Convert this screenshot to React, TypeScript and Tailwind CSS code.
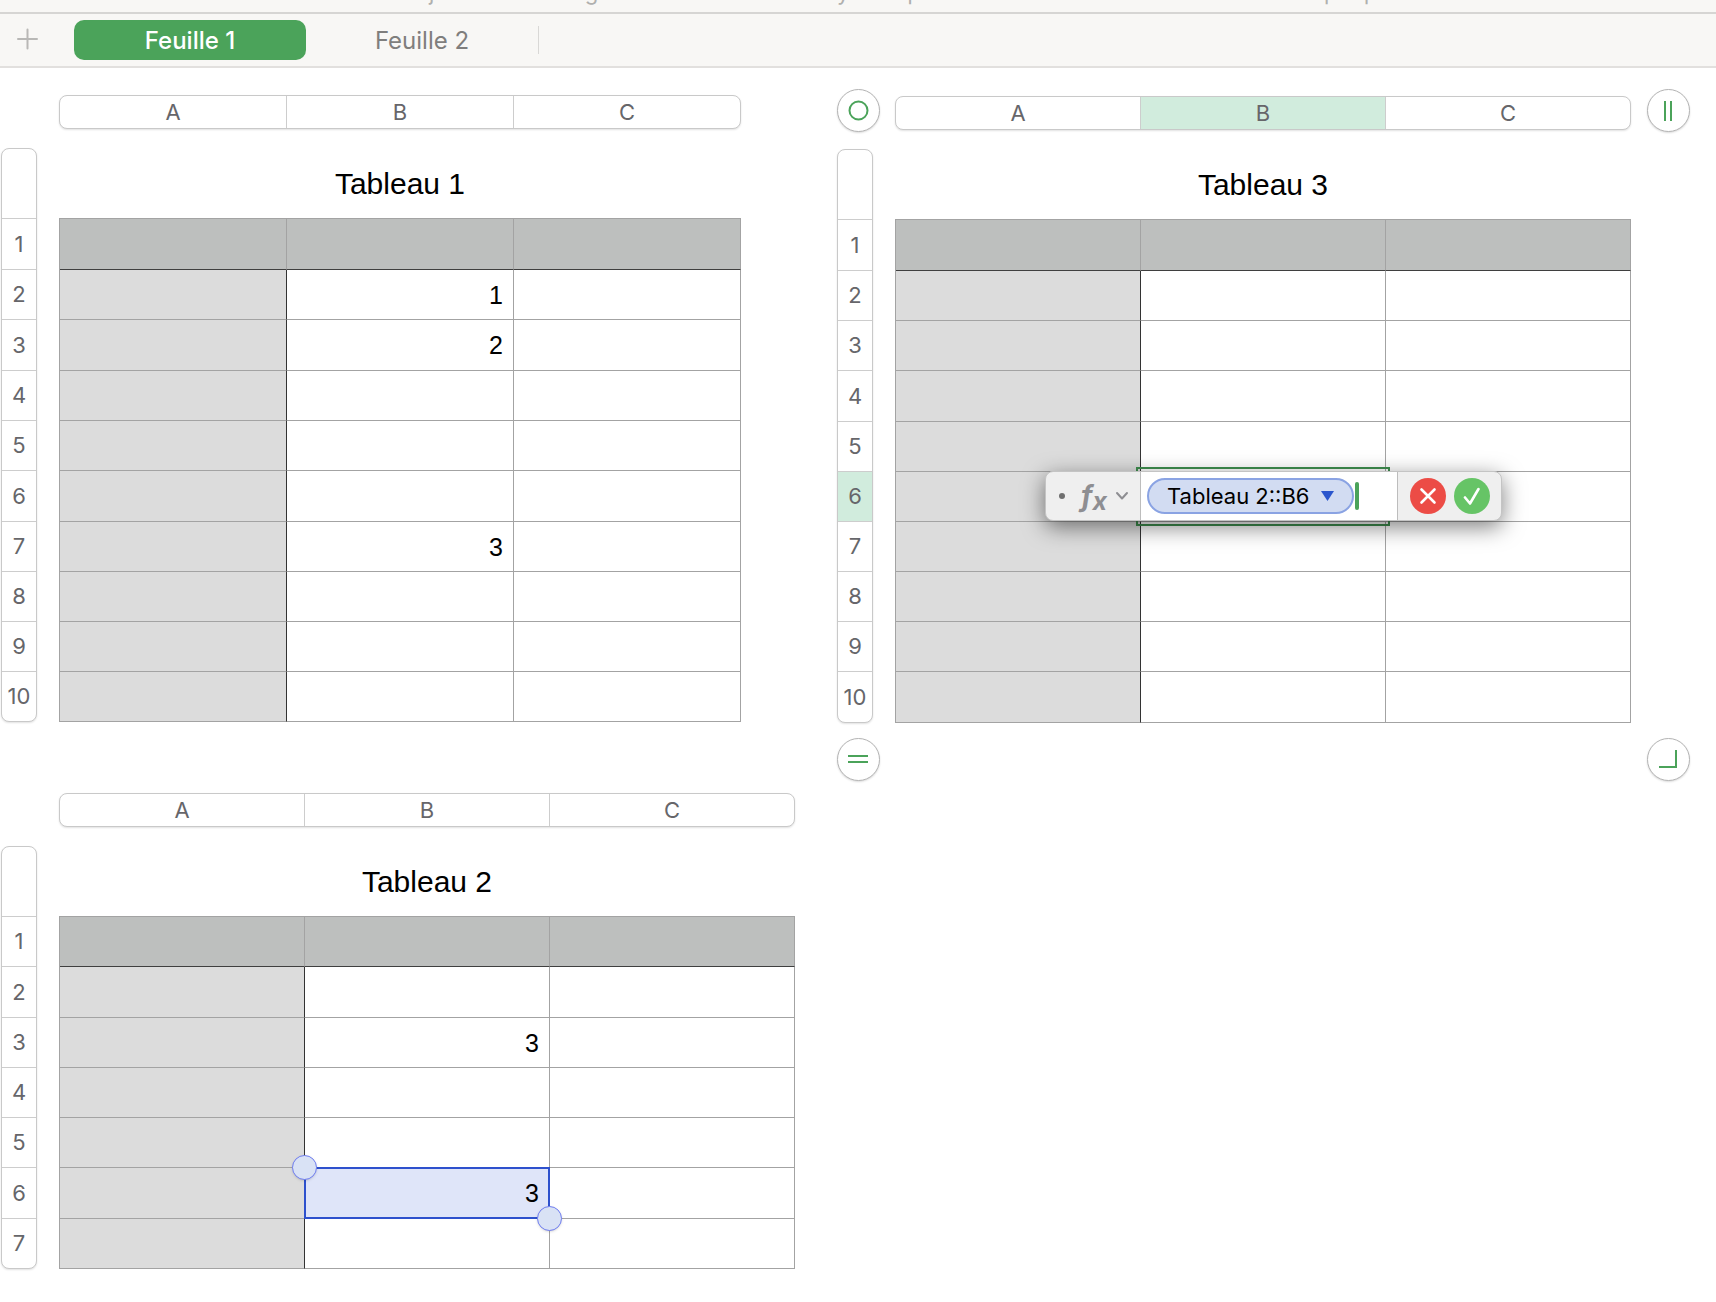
import { ReactNode } from "react";

interface SheetTableProps {
  title: string;
  rows: number[];
  colClass: string;
  values?: Record<string, string>;
  activeCol?: string;
  activeRow?: number;
  overlays?: Record<string, ReactNode>;
  children?: ReactNode;
}

const COLUMNS = ["A", "B", "C"];

const ROW_HEIGHT: Record<number, string> = {
  50: "h-[50px]",
  51: "h-[51px]",
};

const TOOLBAR = [
  { label: "Présentation", box: "ml-1 w-[130px]" },
  { label: "Zoom", box: "ml-12 w-[70px]" },
  { label: "Ajouter une catégorie", box: "ml-[154px] w-60" },
  { label: "Tableau croisé dynamique", box: "ml-4 w-[280px]" },
  { label: "Insérer", box: "ml-[132px] w-[90px]" },
  { label: "Tableau", box: "ml-4 w-[90px]" },
  { label: "Graphique", box: "ml-4 w-[110px]" },
  { label: "Texte", box: "ml-7 w-20" },
];

function SheetTable({ title, rows, colClass, values = {}, activeCol, activeRow, overlays = {}, children }: SheetTableProps) {
  return (
    <section className="relative grid w-max grid-cols-[36px_auto] gap-x-[22px] gap-y-[19px]">
      {/* Column letters */}
      <div className="col-start-2 flex h-[34px] overflow-hidden rounded-lg border border-[#c9c9c9] bg-white shadow-[0_1px_2px_rgba(0,0,0,0.12)]">
        {COLUMNS.map((col) => (
          <button
            key={col}
            className={`${colClass} shrink-0 border-r border-[#cdcdcd] text-[22px] leading-8 text-[#66666a] last:-mr-px ${
              col === activeCol ? "bg-[#d1ecdd]" : ""
            }`}
          >
            {col}
          </button>
        ))}
      </div>

      {/* Row numbers */}
      <div className="flex flex-col overflow-hidden rounded-lg border border-[#c9c9c9] bg-white shadow-[0_1px_2px_rgba(0,0,0,0.12)]">
        <div className="h-[70px] shrink-0 border-b border-[#cdcdcd]" />
        {rows.map((height, i) => (
          <button
            key={i}
            className={`${ROW_HEIGHT[height]} shrink-0 border-b border-[#cdcdcd] text-[22px] text-[#66666a] last:-mb-px ${
              i + 1 === activeRow ? "bg-[#d1ecdd]" : ""
            }`}
          >
            {i + 1}
          </button>
        ))}
      </div>

      <table className="table-fixed border-separate border-spacing-0 border-t border-l border-[#a3a3a3] font-['Liberation_Sans',sans-serif] text-black">
        <caption className="h-[70px] pt-0.5 text-[30px] leading-[68px]">{title}</caption>
        <tbody>
          {rows.map((height, i) => (
            <tr key={i} className={ROW_HEIGHT[height]}>
              {COLUMNS.map((col) => {
                const id = `${col}${i + 1}`;
                if (i === 0) {
                  return <th key={id} scope="col" className={`${colClass} border-r border-b border-r-[#a3a3a3] border-b-[#3f3f3f] bg-[#bdbfbe] p-0`} />;
                }
                if (col === "A") {
                  return <th key={id} scope="row" className="border-r border-b border-r-[#333333] border-b-[#a3a3a3] bg-[#dcdcdc] p-0" />;
                }
                return (
                  <td key={id} className="relative border-r border-b border-[#a3a3a3] p-0 pr-2.5 text-right text-[25px] leading-8">
                    {overlays[id]}
                    <span className="relative z-10">{values[id]}</span>
                  </td>
                );
              })}
            </tr>
          ))}
        </tbody>
      </table>
      {children}
    </section>
  );
}

function Handle({ label, place, children }: { label: string; place: string; children: ReactNode }) {
  return (
    <button
      aria-label={label}
      className={`absolute ${place} flex size-[43px] items-center justify-center rounded-full border border-[#b4b4b4] bg-white shadow-[0_1px_2px_rgba(0,0,0,0.15)]`}
    >
      <svg width="21" height="21" viewBox="0 0 21 21" fill="none" stroke="#4ba35a" strokeWidth="2" overflow="visible">
        {children}
      </svg>
    </button>
  );
}

function ReferencedCell() {
  return (
    <div className="absolute -inset-px z-10 border-2 border-[#2e51cd] bg-[#dfe5f9]">
      <span className="absolute -top-3.5 -left-3.5 size-[25px] rounded-full border border-[#6f7df0] bg-[#d9e2f5] shadow-sm" />
      <span className="absolute -right-3.5 -bottom-3.5 size-[25px] rounded-full border border-[#6f7df0] bg-[#d9e2f5] shadow-sm" />
    </div>
  );
}

function FormulaEditor() {
  return (
    <>
      <div className="absolute -inset-[5px] z-10 border-2 border-[#3f8f4f]" />
      <div className="absolute -top-px -left-24 z-20 flex h-[50px] w-[457px] overflow-hidden rounded-lg border border-[#c4c4c4] bg-[#efefef] font-['Inter',sans-serif] shadow-[0_6px_22px_rgba(0,0,0,0.5)]">
        <div className="flex w-[95px] shrink-0 items-center border-r border-[#bdbdbd] pl-[13px]">
          <span className="size-1.5 rounded-full bg-[#6f6f6f]" />
          <button aria-label="Format de la formule" className="ml-4 flex items-center text-[#8e8e92]">
            <span className="flex w-[26px] items-baseline text-[28px] leading-8 font-bold italic">
              f<sub className="relative top-1 bottom-0 text-[25px] leading-none">x</sub>
            </span>
            <svg className="ml-2" width="14" height="10" viewBox="0 0 14 10" fill="none" stroke="currentColor" strokeWidth="2" strokeLinecap="round" strokeLinejoin="round">
              <path d="M2 2l5 5.500 5-5.500" />
            </svg>
          </button>
        </div>
        <div className="flex w-[257px] shrink-0 items-center border-r border-[#bdbdbd] bg-white pl-1.5">
          <button className="flex h-9 w-[207px] shrink-0 items-center rounded-full border-2 border-[#8aa3e3] bg-[#d2dcf2] pl-[18px] text-[22px] whitespace-nowrap text-black">
            Tableau 2::B6
            <svg className="ml-3 shrink-0" width="13" height="10" viewBox="0 0 13 10" fill="#2b56cd">
              <path d="M0 0h13L6.500 10z" />
            </svg>
          </button>
          <span className="ml-px h-7 w-1 shrink-0 rounded-full bg-[#4ba35a]" />
          <input aria-label="Formule" className="min-w-0 flex-1 bg-transparent outline-none" />
        </div>
        <div className="flex flex-1 items-center gap-2 pl-3">
          <button aria-label="Annuler" className="flex size-9 items-center justify-center rounded-full bg-[#ec4c46]">
            <svg width="18" height="18" viewBox="0 0 18 18" fill="none" stroke="#ffffff" strokeWidth="2.600" strokeLinecap="round">
              <path d="M2.500 2.500l13 13M15.500 2.500l-13 13" />
            </svg>
          </button>
          <button aria-label="Valider" className="flex size-9 items-center justify-center rounded-full bg-[#66c466]">
            <svg width="18" height="18" viewBox="0 0 18 18" fill="none" stroke="#ffffff" strokeWidth="2.600" strokeLinecap="round" strokeLinejoin="round">
              <path d="M2 10.500l5 6L15.500 2" />
            </svg>
          </button>
        </div>
      </div>
    </>
  );
}

export default function App() {
  return (
    <div className="min-h-screen bg-white font-['Inter',sans-serif]">
      <header className="h-3.5 overflow-hidden border-b-2 border-[#d6d5d3] bg-[#f8f7f5]">
        <div className="-mt-5 flex">
          {TOOLBAR.map((item) => (
            <button key={item.label} className={`${item.box} flex shrink-0 justify-center text-[22px] leading-6 whitespace-nowrap text-[#b0b0ae]`}>
              {item.label}
            </button>
          ))}
        </div>
      </header>

      <nav className="flex h-[54px] items-center border-b-2 border-[#e2e0de] bg-[#f8f7f5]">
        <button aria-label="Ajouter une feuille" className="flex w-[74px] justify-start pl-4">
          <svg width="24" height="24" viewBox="0 0 24 24" stroke="#b9b8b6" strokeWidth="2" strokeLinecap="round">
            <path d="M2 11h19M11.500 1.500v19" />
          </svg>
        </button>
        <button className="h-10 w-[232px] rounded-[10px] bg-[#4ba35a] pt-0.5 text-[24px] font-medium text-white">Feuille 1</button>
        <button className="h-10 w-[232px] pt-0.5 text-[24px] text-[#7f7e7d]">Feuille 2</button>
        <span className="h-7 w-px bg-[#d9d8d6]" />
      </nav>

      <main className="flex items-start gap-[42px] pt-[27px] pl-px">
        <div className="flex flex-col gap-[71px]">
          <SheetTable
            title="Tableau 1"
            rows={[51, 50, 51, 50, 50, 51, 50, 50, 50, 50]}
            colClass="w-[227px]"
            values={{ B2: "1", B3: "2", B7: "3" }}
          />
          <SheetTable
            title="Tableau 2"
            rows={[50, 51, 50, 50, 50, 51, 50]}
            colClass="w-[245px]"
            values={{ B3: "3", B6: "3" }}
            overlays={{ B6: <ReferencedCell /> }}
          />
        </div>
        <div className="pt-px">
          <SheetTable
            title="Tableau 3"
            rows={[51, 50, 50, 51, 50, 50, 50, 50, 50, 51]}
            colClass="w-[245px]"
            activeCol="B"
            activeRow={6}
            overlays={{ B6: <FormulaEditor /> }}
          >
            <Handle label="Sélectionner le tableau" place="-top-[7px] left-0">
              <circle cx="10.500" cy="10.500" r="9" />
            </Handle>
            <Handle label="Ajouter une colonne" place="-top-[7px] -right-[59px]">
              <path d="M7 1v20M13 1v20" />
            </Handle>
            <Handle label="Ajouter une rangée" place="-bottom-[58px] left-0">
              <path d="M0 7h20M0 13h20" />
            </Handle>
            <Handle label="Redimensionner le tableau" place="-bottom-[58px] -right-[59px]">
              <path d="M1 18h17V1" />
            </Handle>
          </SheetTable>
        </div>
      </main>
    </div>
  );
}
